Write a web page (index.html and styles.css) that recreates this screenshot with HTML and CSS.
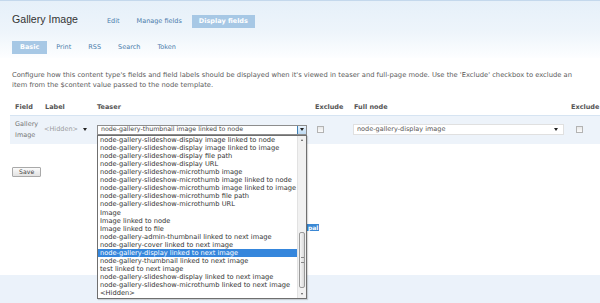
FILE: index.html
```html
<!DOCTYPE html>
<html>
  <head>
    <meta charset="utf-8" />
    <meta name="viewport" content="width=device-width, initial-scale=1.0" />
    <title>Gallery Image • Display fields</title>
    <link rel="stylesheet" href="styles.css">
  </head>
  <body>
    <div class="page-header">
      <div class="title-row">
        <h1>Gallery Image</h1>
        <ul class="tabs">
          <li><a href="#">Edit</a></li>
          <li><a href="#">Manage fields</a></li>
          <li class="active"><a href="#">Display fields</a></li>
        </ul>
      </div>
      <ul class="subtabs">
        <li class="active"><a href="#">Basic</a></li>
        <li><a href="#">Print</a></li>
        <li><a href="#">RSS</a></li>
        <li><a href="#">Search</a></li>
        <li><a href="#">Token</a></li>
      </ul>
    </div>

    <div class="content">
      <p class="help">
        Configure how this content type's fields and field labels should be displayed when it's viewed in teaser and full-page mode. Use the 'Exclude' checkbox to exclude an<br />
        item from the $content value passed to the node template.
      </p>

      <table class="fields">
        <thead>
          <tr>
            <th class="col-field">Field</th>
            <th class="col-label">Label</th>
            <th class="col-teaser">Teaser</th>
            <th class="col-exclude">Exclude</th>
            <th class="col-full">Full node</th>
            <th class="col-exclude2">Exclude</th>
          </tr>
        </thead>
        <tbody>
          <tr>
            <td class="field-name">Gallery<br />Image</td>
            <td>
              <div class="select select-plain label-select">
                <span class="select-text">&lt;Hidden&gt;</span>
                <span class="arrow"></span>
              </div>
            </td>
            <td>
              <div class="select-wrap">
                <div class="select select-open teaser-select">
                  <span class="select-text">node-gallery-thumbnail image linked to node</span>
                  <span class="select-button"><span class="arrow"></span></span>
                </div>
                <div class="dropdown">
                  <ul class="options">
                    <li>node-gallery-slideshow-display image linked to node</li>
                    <li>node-gallery-slideshow-display image linked to image</li>
                    <li>node-gallery-slideshow-display file path</li>
                    <li>node-gallery-slideshow-display URL</li>
                    <li>node-gallery-slideshow-microthumb image</li>
                    <li>node-gallery-slideshow-microthumb image linked to node</li>
                    <li>node-gallery-slideshow-microthumb image linked to image</li>
                    <li>node-gallery-slideshow-microthumb file path</li>
                    <li>node-gallery-slideshow-microthumb URL</li>
                    <li>Image</li>
                    <li>Image linked to node</li>
                    <li>Image linked to file</li>
                    <li>node-gallery-admin-thumbnail linked to next image</li>
                    <li>node-gallery-cover linked to next image</li>
                    <li class="selected">node-gallery-display linked to next image</li>
                    <li>node-gallery-thumbnail linked to next image</li>
                    <li>test linked to next image</li>
                    <li>node-gallery-slideshow-display linked to next image</li>
                    <li>node-gallery-slideshow-microthumb linked to next image</li>
                    <li>&lt;Hidden&gt;</li>
                  </ul>
                  <div class="scrollbar">
                    <span class="scroll-up"></span>
                    <span class="scroll-track">
                      <span class="scroll-thumb"><span class="grip"></span></span>
                    </span>
                    <span class="scroll-down"></span>
                  </div>
                </div>
              </div>
            </td>
            <td><span class="checkbox"></span></td>
            <td>
              <div class="select select-light full-select">
                <span class="select-text">node-gallery-display image</span>
                <span class="arrow"></span>
              </div>
            </td>
            <td><span class="checkbox"></span></td>
          </tr>
        </tbody>
      </table>

      <button class="save" type="button">Save</button>

      <span class="stray-selection">pal</span>
    </div>

    <div class="footer"></div>
  </body>
</html>
```

FILE: styles.css
```css
body {
  margin: 0;
  padding: 0;
  overflow: hidden;
  background: #fff;
  color: #555;
  font-family: "DejaVu Sans", Verdana, sans-serif;
  font-size: 6.5px;
}

ul {
  list-style: none;
  margin: 0;
  padding: 0;
}

a {
  text-decoration: none;
  color: #4a7bab;
}

.page-header {
  box-sizing: border-box;
  height: 58px;
  padding: 12px 12px 0 12px;
  border-top: 1px solid #c4d8ec;
  background: linear-gradient(#e6f0f9, #eef5fb 55%, #fdfeff);
}

.title-row {
  display: flex;
  align-items: flex-start;
  gap: 22px;
}

.title-row h1 {
  margin: 0;
  font-family: "Liberation Sans", Arial, sans-serif;
  font-weight: normal;
  font-size: 10.6px;
  line-height: 13px;
  color: #333;
}

.tabs {
  display: flex;
  gap: 3px;
  margin-top: 2px;
}

.tabs a,
.subtabs a {
  display: block;
  padding: 3px 7px;
  line-height: 7px;
}

.tabs .active a,
.subtabs .active a {
  background: #a7c8e5;
  color: #fff;
  font-weight: bold;
}

.subtabs {
  display: flex;
  gap: 1px;
  margin-top: 13px;
}

.subtabs a {
  padding: 3px 8px;
}

.content {
  position: relative;
  box-sizing: border-box;
  height: 217px;
  padding: 12px 10px 0 10px;
}

.help {
  margin: 0 2px 9px 2px;
  font-size: 6.75px;
  line-height: 10px;
  white-space: nowrap;
  color: #5a5a5a;
}

.fields {
  border-collapse: collapse;
  table-layout: fixed;
  width: 606px;
}

.fields th {
  text-align: left;
  padding: 4px 5px;
  line-height: 8px;
  font-weight: bold;
  color: #555;
  border-bottom: 1px solid #d6e4f2;
}

.col-field { width: 20px; }
.col-label { width: 42px; }
.col-teaser { width: 208px; }
.col-exclude { width: 29px; }
.col-full { width: 207px; }
.col-exclude2 { width: 40px; }

.fields td {
  padding: 3px 5px 4px 5px;
  line-height: 10.7px;
  background: #edf3fa;
  vertical-align: middle;
  white-space: nowrap;
}

.field-name {
  color: #777;
}

.select {
  position: relative;
  display: flex;
  align-items: center;
  box-sizing: border-box;
  height: 11px;
  padding: 0 3px;
}

.select-text {
  flex: 1;
  overflow: hidden;
  white-space: nowrap;
}

.arrow {
  width: 0;
  height: 0;
  border-left: 2px solid transparent;
  border-right: 2px solid transparent;
  border-top: 3px solid #222;
}

.label-select {
  margin-left: -2px;
  width: 49px;
  color: #9a9a9a;
  padding: 0 5px 0 1px;
}

.select-wrap {
  position: relative;
}

.teaser-select {
  width: 210px;
  height: 10px;
  padding: 0 0 0 3px;
  border: 1px solid #8d8d8d;
  background: #fff;
  color: #444;
  font-size: 6.3px;
}

.select-button {
  display: flex;
  align-items: center;
  justify-content: center;
  align-self: stretch;
  width: 8px;
  background: linear-gradient(#e9f3fc, #bcd9f2);
  border-left: 1px solid #3f80b5;
}

.full-select {
  margin-left: -1px;
  width: 211px;
  border: 1px solid #e0e0e0;
  background: #fff;
  color: #555;
  padding: 0 5px 0 3px;
}

.checkbox {
  display: block;
  box-sizing: border-box;
  width: 7px;
  height: 7px;
  margin-left: 2px;
  border: 1px solid #b3b3b3;
  background: linear-gradient(#e8e8e8, #fbfbfb);
}

.col-exclude2,
.fields td:last-child {
  padding-left: 8px;
}

.dropdown {
  position: absolute;
  top: 10px;
  left: 0;
  z-index: 10;
  display: flex;
  box-sizing: border-box;
  width: 210px;
  height: 164px;
  border: 1px solid #6f6f6f;
  background: #fff;
  box-shadow: 1px 1px 1px rgba(0, 0, 0, 0.15);
}

.options {
  flex: 1;
  overflow: hidden;
  font-size: 6.67px;
  line-height: 8.1px;
  color: #333;
}

.options li {
  padding-left: 2px;
  white-space: nowrap;
}

.options .selected {
  background: #3586dc;
  color: #fff;
}

.scrollbar {
  display: flex;
  flex-direction: column;
  width: 8px;
  background: #f1f1f1;
  border-left: 1px solid #e2e2e2;
}

.scroll-up,
.scroll-down {
  align-self: center;
  width: 0;
  height: 0;
  margin: 3px 0;
  border-left: 1.5px solid transparent;
  border-right: 1.5px solid transparent;
}

.scroll-up {
  border-bottom: 2px solid #555;
}

.scroll-down {
  border-top: 2px solid #555;
}

.scroll-track {
  flex: 1;
  display: flex;
  flex-direction: column;
  justify-content: flex-end;
  padding-bottom: 2px;
}

.scroll-thumb {
  display: flex;
  align-items: center;
  justify-content: center;
  box-sizing: border-box;
  height: 56px;
  margin: 0 1px;
  border: 1px solid #9a9a9a;
  border-radius: 2px;
  background: linear-gradient(to right, #f7f7f7, #dadada);
}

.grip {
  width: 3px;
  height: 4px;
  border-top: 1px solid #888;
  border-bottom: 1px solid #888;
}

.save {
  display: block;
  box-sizing: border-box;
  height: 10px;
  margin: 23px 0 0 2px;
  padding: 0 6px;
  font-family: "DejaVu Sans", Verdana, sans-serif;
  font-size: 6.2px;
  line-height: 8px;
  color: #444;
  border: 1px solid #a9a9a9;
  border-radius: 1px;
  background: linear-gradient(#fbfbfb, #e2e2e2);
}

.stray-selection {
  position: absolute;
  top: 166px;
  left: 307px;
  padding: 0 1px;
  line-height: 7px;
  font-size: 6px;
  font-weight: bold;
  color: #fff;
  background: #3a88d4;
}

.footer {
  height: 28px;
  background: #ebf2fa;
}
```
